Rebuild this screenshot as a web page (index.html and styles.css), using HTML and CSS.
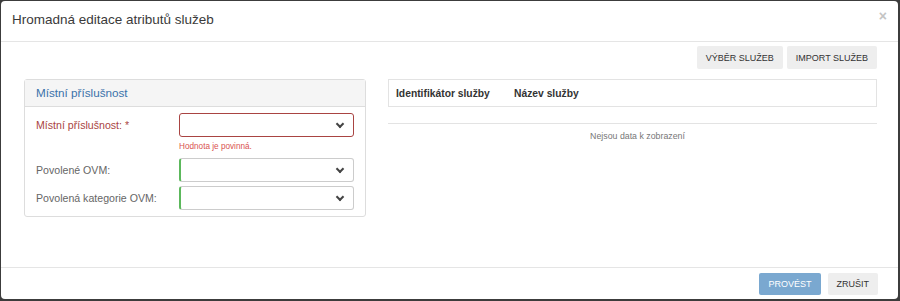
FILE: index.html
```html
<!DOCTYPE html>
<html lang="cs">
<head>
    <meta charset="UTF-8">
    <meta name="viewport" content="width=device-width, initial-scale=1.0">
    <title>Hromadná editace atributů služeb</title>
    <link rel="stylesheet" href="styles.css">
</head>
<body>

<div class="modal">
    <div class="modal-header">
        <h4 class="modal-title">Hromadná editace atributů služeb</h4>
        <span class="close">&times;</span>
    </div>

    <div class="modal-body">
        <div class="toolbar">
            <button class="btn">Výběr služeb</button>
            <button class="btn">Import služeb</button>
        </div>

        <div class="columns">
            <!-- Left: form panel -->
            <div class="panel">
                <div class="panel-heading">Místní příslušnost</div>
                <div class="panel-body">
                    <div class="form-row has-error">
                        <label>Místní příslušnost: *</label>
                        <div class="field">
                            <div class="select"><span class="chevron"></span></div>
                            <div class="help">Hodnota je povinná.</div>
                        </div>
                    </div>
                    <div class="form-row has-success">
                        <label>Povolené OVM:</label>
                        <div class="field">
                            <div class="select"><span class="chevron"></span></div>
                        </div>
                    </div>
                    <div class="form-row has-success">
                        <label>Povolená kategorie OVM:</label>
                        <div class="field">
                            <div class="select"><span class="chevron"></span></div>
                        </div>
                    </div>
                </div>
            </div>

            <!-- Right: services table -->
            <div class="grid">
                <div class="grid-head">
                    <span class="col-id">Identifikátor služby</span>
                    <span class="col-name">Název služby</span>
                </div>
                <div class="grid-empty">Nejsou data k zobrazení</div>
            </div>
        </div>
    </div>

    <div class="modal-footer">
        <button class="btn btn-primary" disabled>Provést</button>
        <button class="btn">Zrušit</button>
    </div>
</div>

</body>
</html>
```

FILE: styles.css
```css
html, body {
    margin: 0;
    height: 100%;
}
body {
    background-color: #3c3c3c;
    font-family: "Liberation Sans", Arial, sans-serif;
    color: #333;
    padding: 1px 2px 2px 1px;
    box-sizing: border-box;
}
.modal {
    background-color: #fff;
    border-radius: 4px;
    height: 100%;
    display: flex;
    flex-direction: column;
}
.modal-header {
    height: 41px;
    border-bottom: 1px solid #e5e5e5;
    display: flex;
    align-items: center;
    justify-content: space-between;
    padding: 0 11px 4px 11px;
    box-sizing: border-box;
}
.modal-title {
    margin: 0;
    font-size: 13.5px;
    font-weight: normal;
    color: #3a3a3a;
}
.close {
    font-size: 14px;
    font-weight: bold;
    color: #c4c4c4;
    line-height: 1;
    margin-bottom: 6px;
}
.modal-body {
    flex: 1;
    padding: 4px 21px 0 23px;
}
.toolbar {
    display: flex;
    justify-content: flex-end;
    gap: 4px;
}
.btn {
    font-family: inherit;
    font-size: 9px;
    text-transform: uppercase;
    color: #333;
    background-color: #eee;
    border: none;
    border-radius: 2px;
    height: 23px;
    padding: 0 9px;
}
.btn-primary {
    background-color: #7aa8d0;
    color: #fff;
}
.columns {
    display: flex;
    gap: 22px;
    margin-top: 10px;
}
.panel {
    width: 342px;
    height: 138px;
    border: 1px solid #ddd;
    border-radius: 3px;
    box-sizing: border-box;
}
.panel-heading {
    height: 26px;
    background-color: #f5f5f5;
    border-bottom: 1px solid #ddd;
    color: #3a72aa;
    font-size: 11.7px;
    line-height: 26px;
    padding-left: 11px;
}
.panel-body {
    padding: 6px 11px 0 11px;
}
.form-row {
    display: flex;
    margin-bottom: 4px;
}
.form-row label {
    width: 143px;
    font-size: 10.6px;
    color: #666;
    line-height: 24px;
}
.has-error label {
    color: #a94442;
}
.field {
    width: 175px;
}
.select {
    height: 24px;
    border: 1px solid #ccc;
    border-radius: 3px;
    box-sizing: border-box;
    position: relative;
}
.has-error .select {
    border-color: #a94442;
}
.has-success .select {
    border-left: 2px solid #5cb85c;
}
.chevron {
    position: absolute;
    right: 10px;
    top: 7px;
    width: 4px;
    height: 4px;
    border-right: 2px solid #444;
    border-bottom: 2px solid #444;
    transform: rotate(45deg);
}
.help {
    font-size: 8.2px;
    line-height: 10px;
    color: #d9534f;
    padding: 5px 0 2px 0;
}
.grid {
    flex: 1;
}
.grid-head {
    height: 28px;
    border: 1px solid #e3e3e3;
    box-sizing: border-box;
    display: flex;
    align-items: center;
    font-size: 10.3px;
    font-weight: bold;
    color: #333;
    padding-left: 7px;
}
.col-id {
    width: 118px;
}
.grid-empty {
    margin-top: 16px;
    border-top: 1px solid #e3e3e3;
    text-align: center;
    font-size: 8.8px;
    color: #777;
    padding: 7px 0 0 10px;
}
.modal-footer {
    height: 31px;
    border-top: 1px solid #e5e5e5;
    display: flex;
    justify-content: flex-end;
    align-items: center;
    gap: 7px;
    padding: 0 20px 0 0;
}
.modal-footer .btn {
    height: 22px;
}
```
